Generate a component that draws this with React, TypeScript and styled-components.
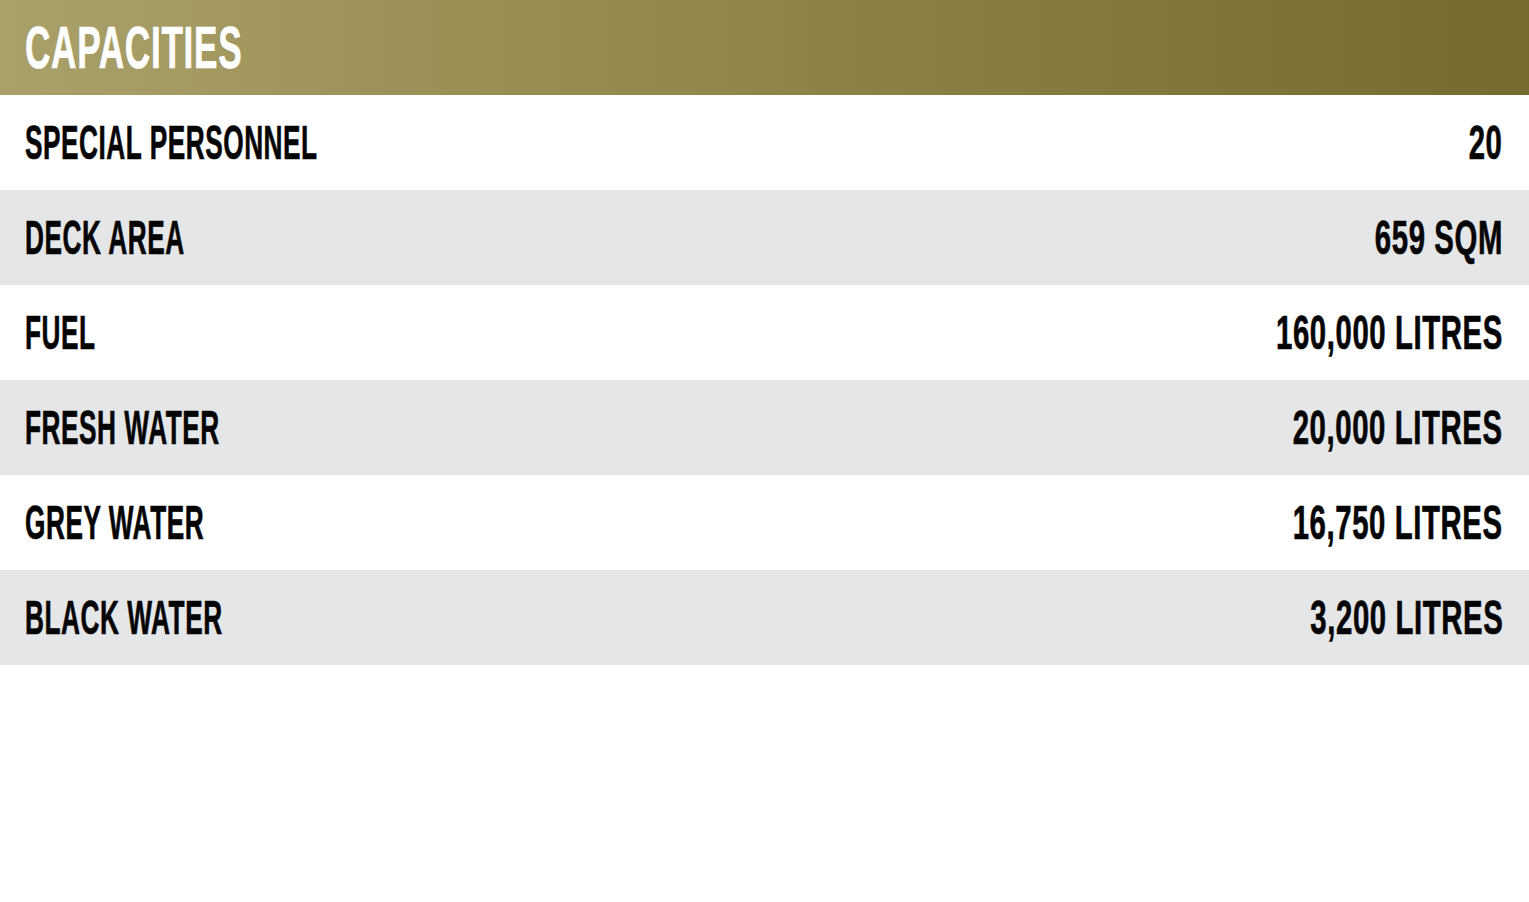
import React from "react";
import styled, { createGlobalStyle } from "styled-components";

const GlobalStyle = createGlobalStyle`
  html, body {
    margin: 0;
    padding: 0;
    background: #ffffff;
  }
  body {
    font-family: "Liberation Sans", Arial, sans-serif;
  }
`;

interface Spec {
  label: string;
  value: string;
}

const specs: Spec[] = [
  { label: "SPECIAL PERSONNEL", value: "20" },
  { label: "DECK AREA", value: "659 SQM" },
  { label: "FUEL", value: "160,000 LITRES" },
  { label: "FRESH WATER", value: "20,000 LITRES" },
  { label: "GREY WATER", value: "16,750 LITRES" },
  { label: "BLACK WATER", value: "3,200 LITRES" },
];

const Panel = styled.section`
  width: 100%;
  display: flex;
  flex-direction: column;
`;

const Header = styled.header`
  height: 95px;
  display: flex;
  align-items: center;
  padding: 0 25px;
  background: linear-gradient(90deg, #aaa06a 0%, #8f8549 50%, #756a2f 100%);
`;

// condensed display face: no Bebas available, so squeeze a bold sans
const Condensed = styled.span<{ $origin: "left" | "right" }>`
  display: inline-block;
  font-family: "Liberation Sans", Arial, sans-serif;
  font-weight: 700;
  white-space: nowrap;
  letter-spacing: 1px;
  transform: scaleX(0.535);
  transform-origin: ${(p) => p.$origin} center;
  -webkit-text-stroke: 0.7px currentColor;
`;

const Title = styled(Condensed)`
  color: #ffffff;
  font-size: 60px;
  line-height: 1;
  letter-spacing: 1.2px;
  transform: scaleX(0.586);
`;

const Row = styled.div<{ $shaded: boolean }>`
  height: 95px;
  display: flex;
  align-items: center;
  justify-content: space-between;
  padding: 0 26px 0 25px;
  background: ${(p) => (p.$shaded ? "#e5e6e8" : "#ffffff")};
  color: #050505;
`;

const Label = styled(Condensed)`
  font-size: 49px;
  line-height: 1;
`;

const Value = styled(Condensed)`
  font-size: 49px;
  line-height: 1;
  transform: scaleX(0.599);
`;

export default function App() {
  return (
    <>
      <GlobalStyle />
      <Panel>
        <Header>
          <Title $origin="left">CAPACITIES</Title>
        </Header>
        {specs.map((s, i) => (
          <Row key={s.label} $shaded={i % 2 === 1}>
            <Label $origin="left">{s.label}</Label>
            <Value $origin="right">{s.value}</Value>
          </Row>
        ))}
      </Panel>
    </>
  );
}
